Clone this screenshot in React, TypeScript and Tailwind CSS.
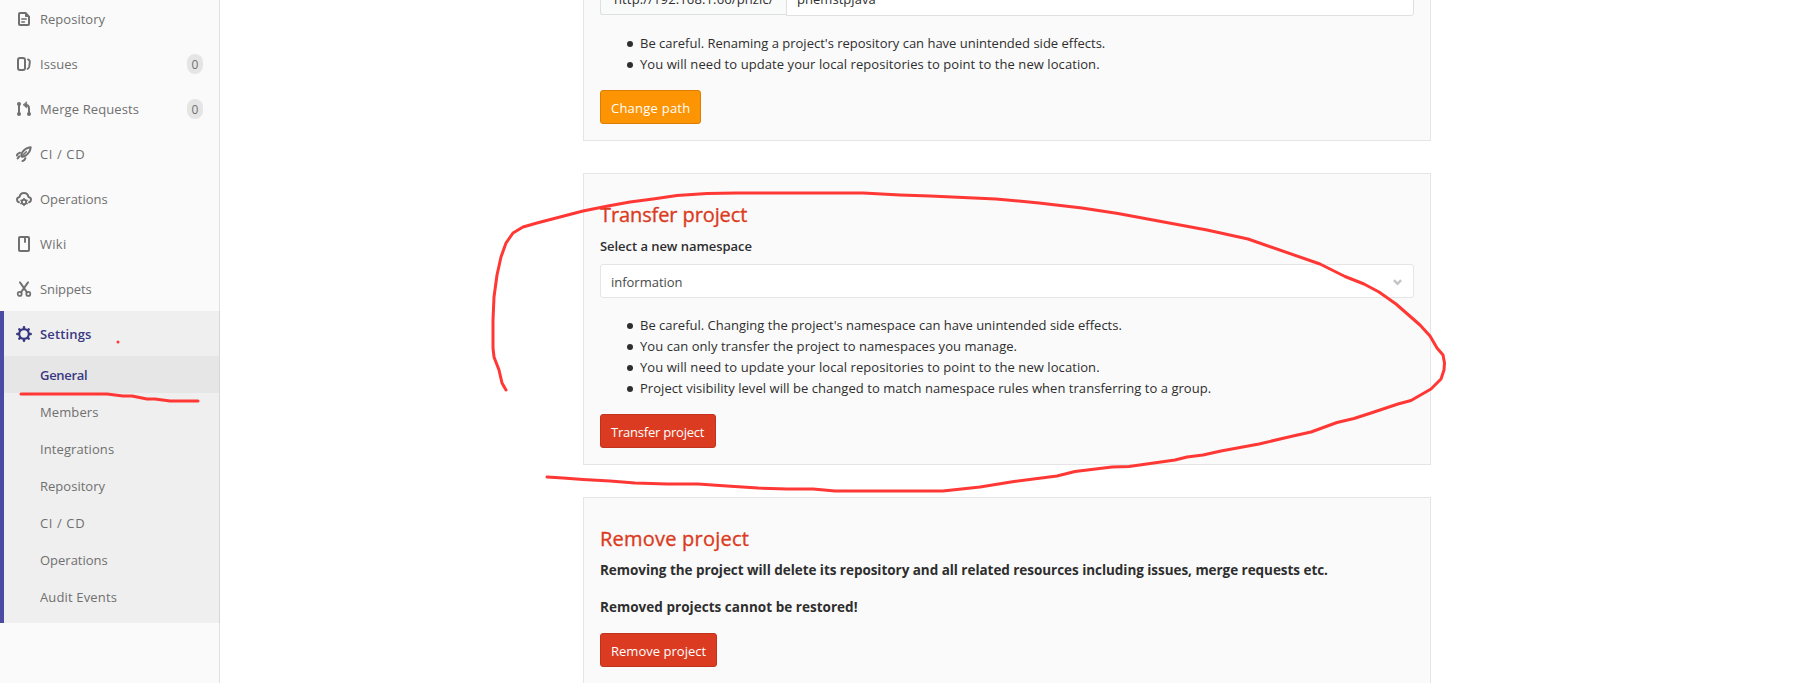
import React from "react";

type IconProps = { children: React.ReactNode };

function Icon({ children }: IconProps) {
  return (
    <svg
      className="mr-2 h-4 w-4 shrink-0"
      viewBox="0 0 16 16"
      fill="none"
      stroke="currentColor"
      strokeWidth="2"
      strokeLinecap="round"
      strokeLinejoin="round"
    >
      {children}
    </svg>
  );
}

const docIcon = (
  <Icon>
    <path d="M9.6 2H4a1 1 0 0 0-1 1v10a1 1 0 0 0 1 1h8a1 1 0 0 0 1-1V5.6z" />
    <path d="M9.5 2v3.5H13z" fill="currentColor" strokeWidth="1" />
    <path d="M5.8 8h4.4M5.8 11h2.6" strokeWidth="1.6" />
  </Icon>
);

const issuesIcon = (
  <Icon>
    <rect x="2" y="2" width="7" height="12" rx="2" />
    <path d="M12 3.4c1.4.6 2 1.5 1.8 2.9l-.6 4.4c-.2 1.1-.6 1.7-1.6 2.1" strokeWidth="1.9" />
  </Icon>
);

const mergeIcon = (
  <Icon>
    <circle cx="3" cy="3" r="2" fill="currentColor" stroke="none" />
    <circle cx="3" cy="13" r="2" fill="currentColor" stroke="none" />
    <circle cx="13" cy="13" r="2" fill="currentColor" stroke="none" />
    <path d="M3 3v10M13 13V7.4C13 5.2 11.8 4 9.6 4" strokeLinecap="butt" />
    <path d="M10.6 1.2v5.6L7.4 4z" fill="currentColor" strokeWidth=".8" />
  </Icon>
);

const rocketIcon = (
  <Icon>
    <path d="M14.7 1.3c-4.3.3-6.4 2.3-8.1 4.6-1.1 1.5-1.4 3-1.2 4.7 1.7.2 3.3-.1 4.7-1.3 2.4-1.8 4.3-3.9 4.6-8z" />
    <path d="M10.3 5.7 6 10" strokeWidth="1.5" />
    <path d="M4 6.7 1.8 7.8.8 9.4M9.3 12.2l-1.1 2-1.7.9M3.2 10.4l-1.5 2" />
  </Icon>
);

const cloudIcon = (
  <Icon>
    <path d="M2.9 11.3C1.6 10.8 1 9.9 1 8.7c0-1.5 1.1-2.6 2.6-2.8C4 3.6 5.7 2.1 8 2.1s4 1.5 4.4 3.8c1.5.2 2.6 1.3 2.6 2.8 0 1.2-.6 2.1-1.9 2.6" />
    <circle cx="8" cy="11" r="2.2" strokeWidth="1.9" />
    <path
      d="M8 7.6v1M8 13.4v1.1M11.1 9.3l-1 .5M5.9 12.2l-1 .5M4.9 9.3l1 .5M10.1 12.2l1 .5"
      strokeWidth="1.5"
    />
  </Icon>
);

const wikiIcon = (
  <Icon>
    <rect x="3" y="1" width="10" height="14" rx="1" />
    <path d="M9 2v4.8" strokeWidth="1.9" strokeLinecap="butt" />
  </Icon>
);

const snippetsIcon = (
  <Icon>
    <circle cx="3.7" cy="12.9" r="2" strokeWidth="1.7" />
    <circle cx="12.3" cy="12.9" r="2" strokeWidth="1.7" />
    <path d="M4 1.4 11 11.4M12 1.4 5 11.4" strokeWidth="1.9" />
  </Icon>
);

const gearIcon = (
  <Icon>
    <circle cx="8" cy="8" r="4.8" strokeWidth="2.2" />
    <path
      d="M8 1.3v1.4M8 13.3v1.4M1.3 8h1.4M13.3 8h1.4M3.3 3.3l.9.9M11.8 11.8l.9.9M3.3 12.7l.9-.9M11.8 4.2l.9-.9"
      strokeWidth="2.5"
    />
  </Icon>
);

type NavItem = { label: string; icon: React.ReactNode; count?: number; tracking: string };

const navItems: NavItem[] = [
  { label: "Repository", icon: docIcon, tracking: "tracking-[0.02px]" },
  { label: "Issues", icon: issuesIcon, count: 0, tracking: "tracking-[0.04px]" },
  { label: "Merge Requests", icon: mergeIcon, count: 0, tracking: "tracking-[0.1px]" },
  { label: "CI / CD", icon: rocketIcon, tracking: "tracking-[0.6px]" },
  { label: "Operations", icon: cloudIcon, tracking: "tracking-[-0.01px]" },
  { label: "Wiki", icon: wikiIcon, tracking: "tracking-[0.29px]" },
  { label: "Snippets", icon: snippetsIcon, tracking: "tracking-[-0.1px]" },
];

const subItems = [
  { label: "Members", tracking: "tracking-[0.1px]" },
  { label: "Integrations", tracking: "tracking-[0.1px]" },
  { label: "Repository", tracking: "tracking-[0.02px]" },
  { label: "CI / CD", tracking: "tracking-[0.6px]" },
  { label: "Operations", tracking: "tracking-[-0.01px]" },
  { label: "Audit Events", tracking: "tracking-[0.15px]" },
];

function NavLabel({ text, tracking }: { text: string; tracking: string }) {
  return <span className={`pt-[1.5px] ${tracking}`}>{text}</span>;
}

function Sidebar() {
  return (
    <aside className="w-[220px] shrink-0 border-r border-[#e1e1e1] bg-[#fafafa] text-[#707070]">
      <nav className="-mt-1">
        {navItems.map((item) => (
          <a key={item.label} className="flex h-[45px] items-center px-4">
            {item.icon}
            <NavLabel text={item.label} tracking={item.tracking} />
            {item.count !== undefined && (
              <span className="mt-px ml-auto flex h-5 w-4 items-center justify-center rounded-full bg-[#e5e5e5] pt-px text-xs">
                {item.count}
              </span>
            )}
          </a>
        ))}
        <div className="-mr-px border-r border-l-4 border-r-[#d7d7d7] border-l-[#4b4ba3] bg-[#efefef] pb-2">
          <a className="flex h-[45px] items-center pl-3 font-semibold text-[#393982]">
            {gearIcon}
            <NavLabel text="Settings" tracking="tracking-[0.14px]" />
          </a>
          <a className="flex h-[37px] items-center bg-[#e6e6e6] pl-9 font-semibold text-[#393982]">
            <NavLabel text="General" tracking="tracking-[-0.3px]" />
          </a>
          {subItems.map((item) => (
            <a key={item.label} className="flex h-[37px] items-center pl-9">
              <NavLabel text={item.label} tracking={item.tracking} />
            </a>
          ))}
        </div>
      </nav>
    </aside>
  );
}

function Bullets({ items }: { items: { text: string; tracking: string }[] }) {
  return (
    <ul className="mt-[17px] pl-[27px] leading-[21px]">
      {items.map((item) => (
        <li key={item.text} className="flex items-center gap-[7px]">
          <span className="h-1.5 w-1.5 rounded-full bg-[#2e2e2e]" />
          <span className={item.tracking}>{item.text}</span>
        </li>
      ))}
    </ul>
  );
}

function DangerButton({ label, className }: { label: string; className: string }) {
  return (
    <button
      className={`block h-[34px] rounded-[3px] border border-[#c0341d] bg-[#db3b21] pt-[3px] pl-2.5 text-left text-white ${className}`}
    >
      {label}
    </button>
  );
}

function PanelTitle({ text, tracking }: { text: string; tracking: string }) {
  return (
    <h4
      className={`mt-[29px] text-[20px] leading-6 font-medium text-[#db3b21] [-webkit-text-stroke:0.35px] ${tracking}`}
    >
      {text}
    </h4>
  );
}

function RenamePanel() {
  return (
    <section className="flow-root h-[141px] border border-t-0 border-[#e5e5e5] bg-[#fafafa] px-4">
      <div className="-mt-[20px] flex items-start">
        <div className="h-[35px] w-[186px] rounded-l-[3px] border border-r-0 border-[#dfdfdf] bg-[#f9fafa] pt-[8px] pl-[13px] leading-[20px] tracking-[0.13px]">
          http://192.168.1.66/phzlc/
        </div>
        <div className="h-[36px] flex-1 rounded-r-[3px] border border-[#dfdfdf] bg-white pt-[8px] pl-2.5 leading-[20px] tracking-[0.04px]">
          phemstpjava
        </div>
      </div>
      <Bullets
        items={[
          {
            text: "Be careful. Renaming a project's repository can have unintended side effects.",
            tracking: "tracking-[-0.005px]",
          },
          {
            text: "You will need to update your local repositories to point to the new location.",
            tracking: "tracking-[0.07px]",
          },
        ]}
      />
      <button className="mt-[15px] block h-[34px] w-[101px] rounded-[3px] border border-[#de7e00] bg-[#fc9403] pt-[3px] pl-2.5 text-left tracking-[0.23px] text-white">
        Change path
      </button>
    </section>
  );
}

function TransferPanel() {
  return (
    <section className="mt-8 h-[292px] border border-[#e5e5e5] bg-[#fafafa] px-4">
      <PanelTitle text="Transfer project" tracking="tracking-[-0.1px]" />
      <label className="mt-[9px] block leading-[20px] font-semibold tracking-[-0.05px]">Select a new namespace</label>
      <div className="mt-2 flex h-[34px] items-center justify-between rounded-[3px] border border-[#e5e5e5] bg-white pt-[3px] pr-[11px] pl-2.5 text-[#4a4a4a]">
        <span className="tracking-[-0.02px]">information</span>
        <svg className="h-[7px] w-[9px]" viewBox="0 0 9 7" fill="none" stroke="#c4c4c4" strokeWidth="2.4">
          <path d="M.9 1.2 4.5 4.8 8.1 1.2" />
        </svg>
      </div>
      <Bullets
        items={[
          {
            text: "Be careful. Changing the project's namespace can have unintended side effects.",
            tracking: "tracking-[0.005px]",
          },
          {
            text: "You can only transfer the project to namespaces you manage.",
            tracking: "tracking-[0.055px]",
          },
          {
            text: "You will need to update your local repositories to point to the new location.",
            tracking: "tracking-[0.07px]",
          },
          {
            text: "Project visibility level will be changed to match namespace rules when transferring to a group.",
            tracking: "tracking-[0.045px]",
          },
        ]}
      />
      <DangerButton label="Transfer project" className="mt-[15px] w-[116px] tracking-[-0.22px]" />
    </section>
  );
}

function RemovePanel() {
  return (
    <section className="mt-8 h-[203px] border border-[#e5e5e5] bg-[#fafafa] px-4">
      <PanelTitle text="Remove project" tracking="tracking-[0.22px]" />
      <p className="mt-[9px] text-[13.5px] leading-[20px] font-bold tracking-[-0.045px]">
        Removing the project will delete its repository and all related resources including issues, merge requests etc.
      </p>
      <p className="mt-[17px] text-[13.5px] leading-[20px] font-bold tracking-[0.03px]">
        Removed projects cannot be restored!
      </p>
      <DangerButton label="Remove project" className="mt-4 w-[117px] tracking-[0.02px]" />
    </section>
  );
}

/* Freehand red marker strokes drawn over the page. */
function MarkerStrokes() {
  return (
    <svg
      className="pointer-events-none absolute inset-0 h-full w-full"
      viewBox="0 0 1808 683"
      fill="none"
      stroke="#ff3835"
      strokeWidth="3"
      strokeLinecap="round"
      strokeLinejoin="round"
    >
      <polyline points="506,390 502,383 499,370 494,357 493,348 493,320 494,297 497,275 501,257 506,243 513,233 523,227 537,223 560,217 583,211 608,206 630,202 653,199 677,195.5 707,193.5 737,193 863,193 900,195 930,196 996,199 1039,203 1082,208 1118,213.5 1207,230 1248,239 1320,264 1345,276.5 1364,284 1379,292 1396,304 1420,325 1430,336 1437,348 1443,355 1444.5,363 1444,370 1441,379 1431,389 1411,400.5 1398,404 1371,413 1354,418.5 1337,422.5 1311,432 1293,436 1259,444 1221,451 1203,455 1187,457 1175,460 1129,466.5 1112,467 1075,471.5 1057,476 1014,481.5 980,487 943,491 835,491 813,489 787,489 758,488 727,486 698,484 667,484 635,483 610,481 583,479.5 563,478 547,477" />
      <polyline points="21,394 107,394 123,396 132,396 147,399 155,399 170,401 198,401" />
      <circle cx="118" cy="342" r="1.5" fill="#ff3835" stroke="none" />
    </svg>
  );
}

export default function App() {
  return (
    <div className="relative flex h-[683px] w-full overflow-hidden bg-white font-['Open_Sans','Noto_Sans',sans-serif] text-[13px] text-[#2e2e2e]">
      <Sidebar />
      <main className="ml-[363px] w-[848px]">
        <RenamePanel />
        <TransferPanel />
        <RemovePanel />
      </main>
      <MarkerStrokes />
    </div>
  );
}
